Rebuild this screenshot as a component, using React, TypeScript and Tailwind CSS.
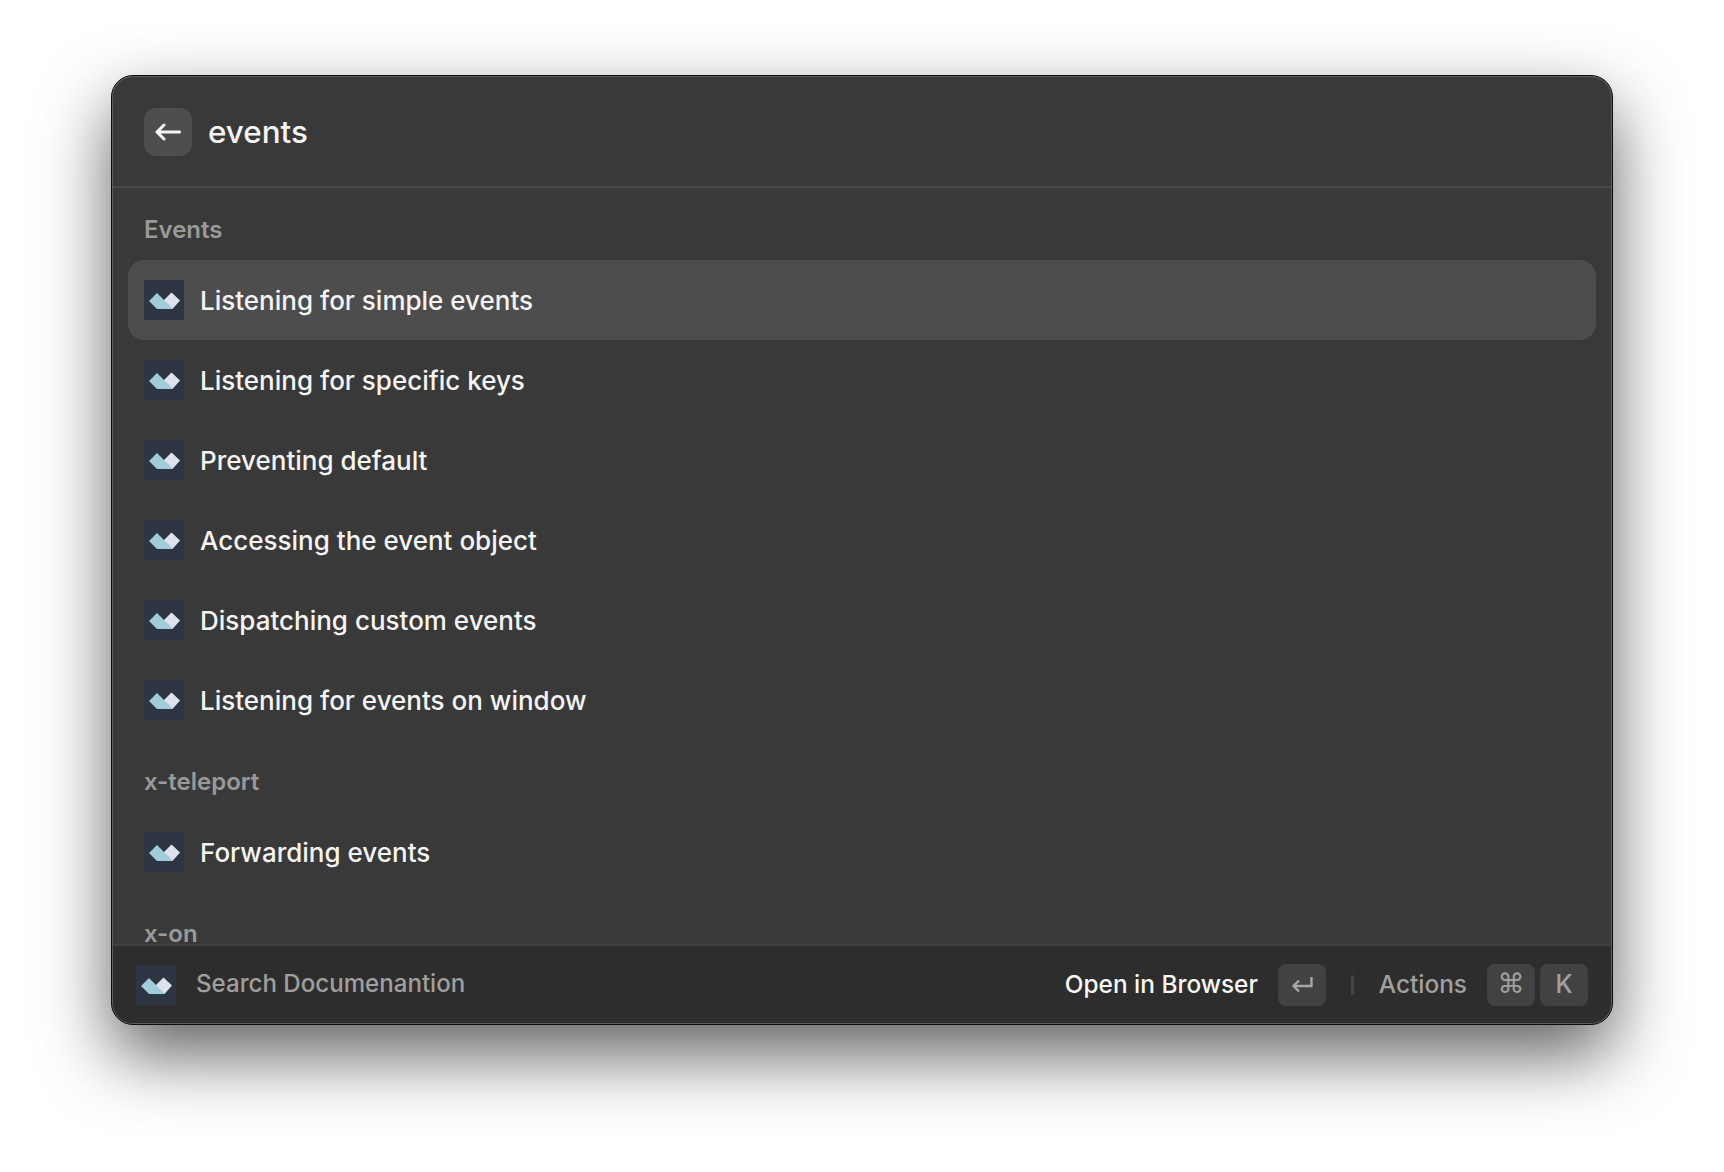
import React from "react";

function Logo() {
  return (
    <div className="w-10 h-10 shrink-0 bg-[#2d3442]">
      <svg width="40" height="40" viewBox="0 0 40 40">
        <polygon points="27.5,12.5 36,20.5 28.5,29 19.5,20.5" fill="#dfe3ee" />
        <polygon points="5,21 13,13 29,29 13,29" fill="#a2ccd9" />
      </svg>
    </div>
  );
}

function Row({ label, active }: { label: string; active?: boolean }) {
  return (
    <div className={`h-20 shrink-0 flex items-center px-4 gap-4 rounded-2xl ${active ? "bg-[#4d4d4d]" : ""}`}>
      <Logo />
      <span className="text-[26px] mt-[2px] text-[#f4f4f4] font-[450] leading-none">{label}</span>
    </div>
  );
}

function Section({ label }: { label: string }) {
  return (
    <div className="h-[72px] shrink-0 flex items-center px-4 pt-[12px] text-[24px] font-semibold text-[#9a9a9a]">
      {label}
    </div>
  );
}

function Key({ children }: { children: React.ReactNode }) {
  return (
    <div className="w-12 h-[42px] rounded-lg bg-[#434242] flex items-center justify-center text-[25px] text-[#a0a0a0] font-medium">
      {children}
    </div>
  );
}

export default function App() {
  return (
    <div className="w-[1724px] h-[1172px] bg-white flex items-start justify-center pt-[75px] font-['Inter',sans-serif]">
      <div className="w-[1502px] h-[950px] rounded-[22px] border border-[#0c0c0c] bg-[#5e5e5e] p-px shadow-[0_30px_70px_rgba(0,0,0,0.62)]">
        <div className="h-full rounded-[20px] bg-[#393939] overflow-hidden flex flex-col">
          <div className="h-[111px] shrink-0 flex items-center pl-[31px] gap-4 border-b-2 border-[#4a4a4a]">
            <div className="w-12 h-12 rounded-xl bg-[#4e4e4e] flex items-center justify-center">
              <svg width="26" height="20" viewBox="0 0 26 20" fill="none" stroke="#f5f5f5" strokeWidth="3" strokeLinecap="round" strokeLinejoin="round">
                <path d="M24.5 10H2M9 3L2 10L9 17" />
              </svg>
            </div>
            <span className="text-[31.4px] mt-[2px] text-[#f4f4f4] font-[450] leading-none">events</span>
          </div>
          <div className="flex-1 min-h-0 overflow-hidden flex flex-col px-[15px]">
            <Section label="Events" />
            <Row label="Listening for simple events" active />
            <Row label="Listening for specific keys" />
            <Row label="Preventing default" />
            <Row label="Accessing the event object" />
            <Row label="Dispatching custom events" />
            <Row label="Listening for events on window" />
            <Section label="x-teleport" />
            <Row label="Forwarding events" />
            <Section label="x-on" />
          </div>
          <div className="h-[79px] shrink-0 flex items-center pl-[23px] pr-[23px] bg-[#2e2d2d] border-t-2 border-[#3f3f3f]">
            <Logo />
            <span className="ml-5 text-[24.1px] font-[450] text-[#9f9f9f]">Search Documenantion</span>
            <div className="ml-auto flex items-center">
              <span className="text-[24.4px] font-[550] text-[#f7f7f7]">Open in Browser</span>
              <div className="ml-5 w-12 h-[42px] rounded-lg bg-[#434242] flex items-center justify-center">
                <svg width="24" height="20" viewBox="0 0 24 20" fill="none" stroke="#a8a8a8" strokeWidth="2.4">
                  <path d="M21.5 2V11H3.5M9 5.5L3.5 11L9 16.5" />
                </svg>
              </div>
              <div className="ml-[25px] w-[3px] h-5 bg-[#454545] rounded" />
              <span className="ml-[25px] text-[24.4px] font-medium text-[#a0a0a0]">Actions</span>
              <div className="ml-5 flex gap-[5px]">
                <Key>
                  <span className="font-['DejaVu_Sans'] text-[27px]">⌘</span>
                </Key>
                <Key>K</Key>
              </div>
            </div>
          </div>
        </div>
      </div>
    </div>
  );
}
